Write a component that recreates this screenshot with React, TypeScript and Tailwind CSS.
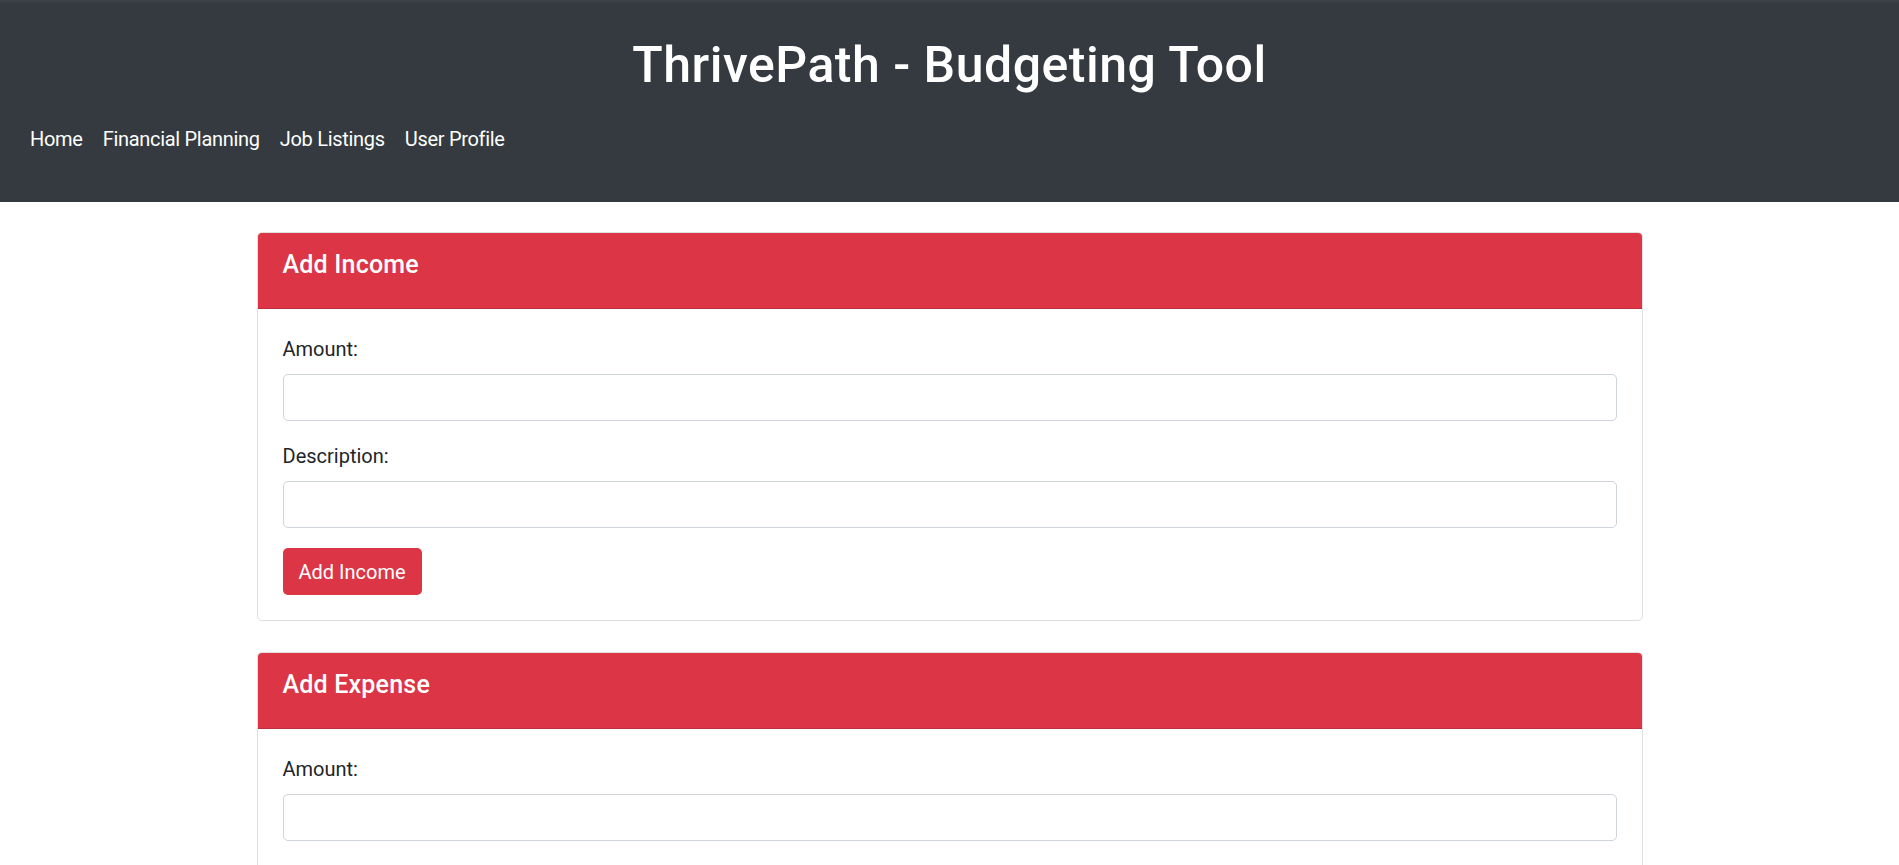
import React from "react";

const font = { fontFamily: "Roboto, 'Noto Sans', sans-serif" };

function Field({ label }: { label: string }) {
  return (
    <div className="mb-[20px]">
      <label className="block text-[20px] leading-[30px] text-[#212529] mb-[10px]">{label}</label>
      <input
        type="text"
        className="block w-full h-[47px] border border-[#ced4da] rounded-[5px] bg-white px-[15px] text-[20px] outline-none"
      />
    </div>
  );
}

function Card({ title, button }: { title: string; button: string }) {
  return (
    <div className="w-[1386px] mx-auto border border-[#dfdfdf] rounded-[5px] overflow-hidden bg-white">
      <div className="h-[76px] bg-[#dc3545] border-b border-[#c12e3b] pt-[17px] px-[25px]">
        <h5 className="text-[25px] leading-[30px] font-medium text-white tracking-[0.2px]">{title}</h5>
      </div>
      <div className="p-[25px]">
        <Field label="Amount:" />
        <Field label="Description:" />
        <button className="h-[47px] px-[16px] bg-[#dc3545] text-white text-[20px] leading-[30px] rounded-[5px]">
          {button}
        </button>
      </div>
    </div>
  );
}

export default function App() {
  return (
    <div className="min-h-screen bg-white" style={font}>
      <header className="h-[202px] bg-[#343a40] border-t-[2px] border-[#3e4246]">
        <h1 className="pt-[33px] text-center text-[50px] leading-[60px] font-medium text-white tracking-[0.5px]">
          ThrivePath - Budgeting Tool
        </h1>
        <nav className="mt-[29px] flex px-[20px]">
          {["Home", "Financial Planning", "Job Listings", "User Profile"].map((n) => (
            <a key={n} href="#" className="px-[10px] text-[20px] leading-[30px] text-white tracking-[-0.3px]">
              {n}
            </a>
          ))}
        </nav>
      </header>
      <main className="pt-[30px] flex flex-col gap-[31px] pb-[30px]">
        <Card title="Add Income" button="Add Income" />
        <Card title="Add Expense" button="Add Expense" />
      </main>
    </div>
  );
}
